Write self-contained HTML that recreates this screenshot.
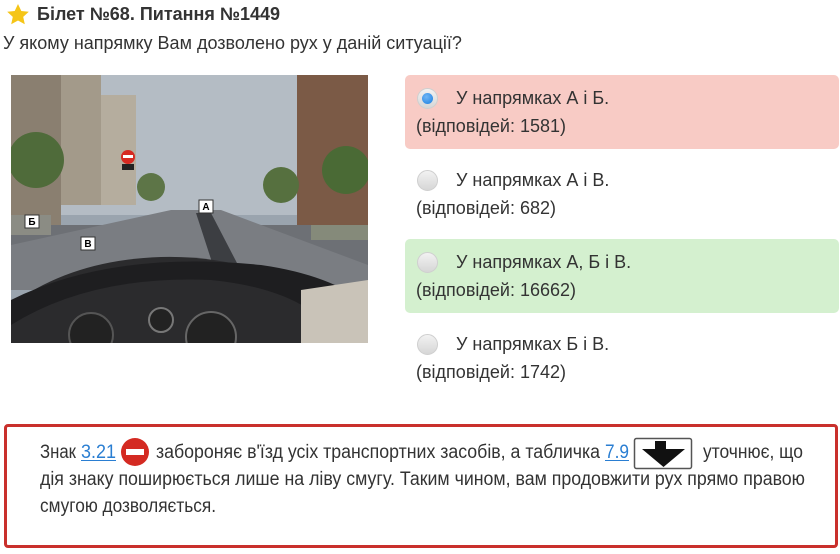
<!DOCTYPE html>
<html><head><meta charset="utf-8"><style>
*{margin:0;padding:0;box-sizing:border-box}
body{width:840px;height:554px;background:#fff;font-family:"Liberation Sans",Arial,sans-serif;color:#333;position:relative;overflow:hidden}
.abs{position:absolute}
h1{position:absolute;left:37px;top:4px;font-size:18px;font-weight:bold;color:#333;white-space:nowrap}
.q{position:absolute;left:3px;top:33px;font-size:18px;white-space:nowrap}
.ans{position:absolute;left:405px;width:434px;height:74px;border-radius:5px;font-size:18px}
.ans .t{position:absolute;left:51px;top:13px;white-space:nowrap}
.ans .c{position:absolute;left:11px;top:41px;white-space:nowrap}
.rad{position:absolute;left:12px;top:13px;width:21px;height:21px;border-radius:50%;background:linear-gradient(#f2f2f2,#d6d6d6);border:1px solid #cfcfcf}
.rad.on::after{content:"";position:absolute;left:4px;top:4px;width:11px;height:11px;border-radius:50%;background:radial-gradient(circle at 40% 35%,#6fb6f5,#1a7ee0)}
.exp{position:absolute;left:4px;top:424px;width:834px;height:124px;border:3px solid #c9302c;border-radius:4px}
</style></head><body>
<svg class="abs" style="left:6px;top:3px" width="24" height="24" viewBox="0 0 24 24"><path d="M12 1l3.3 7 7.5.8-5.6 5.1 1.6 7.4L12 17.5 5.2 21.3l1.6-7.4L1.2 8.8 8.7 8z" fill="#f5c518"/></svg>
<h1>Білет №68. Питання №1449</h1>
<div class="q">У якому напрямку Вам дозволено рух у даній ситуації?</div>

<svg class="abs" style="left:11px;top:75px" width="357" height="268" viewBox="0 0 357 268">
<rect width="357" height="268" fill="#9aa4ae"/>
<rect width="357" height="140" fill="#b4bcc4"/>
<rect x="0" y="0" width="50" height="150" fill="#8a7f70"/>
<rect x="50" y="0" width="40" height="130" fill="#a39a8a"/>
<rect x="90" y="20" width="35" height="110" fill="#b5ad9e"/>
<rect x="286" y="0" width="71" height="160" fill="#7b5a46"/>
<circle cx="25" cy="85" r="28" fill="#4f6b3a"/>
<circle cx="335" cy="95" r="24" fill="#4a6a35"/>
<circle cx="270" cy="110" r="18" fill="#56703f"/>
<circle cx="140" cy="112" r="14" fill="#5d7547"/>
<polygon points="0,150 357,150 357,210 0,210" fill="#6d7075"/>
<polygon points="160,135 210,135 357,190 357,215 0,215 0,170" fill="#7a7d82"/>
<polygon points="185,138 200,138 240,215 210,215" fill="#3c3e42"/>
<rect x="0" y="140" width="40" height="20" fill="#8b8c84"/>
<rect x="300" y="150" width="57" height="15" fill="#858a7a"/>
<circle cx="117" cy="82" r="7" fill="#d62a22"/><rect x="112" y="80" width="10" height="3" fill="#fff"/>
<rect x="111" y="89" width="12" height="6" fill="#222"/>
<rect x="188" y="125" width="14" height="13" fill="#fff" stroke="#333"/><text x="195" y="135" font-size="10" text-anchor="middle" font-weight="bold" fill="#000">А</text>
<rect x="14" y="140" width="14" height="13" fill="#fff" stroke="#333"/><text x="21" y="150" font-size="10" text-anchor="middle" font-weight="bold" fill="#000">Б</text>
<rect x="70" y="162" width="14" height="13" fill="#fff" stroke="#333"/><text x="77" y="172" font-size="10" text-anchor="middle" font-weight="bold" fill="#000">В</text>
<path d="M0 268 L0 230 Q60 185 150 182 Q230 180 290 215 L290 268Z" fill="#2b2b2d"/>
<path d="M0 225 Q100 175 250 190 Q320 200 357 230 L357 268 L330 268 Q300 215 200 205 Q80 200 0 250Z" fill="#1e1e20"/>
<path d="M290 215 L357 205 L357 268 L290 268Z" fill="#c9c3b8"/>
<circle cx="80" cy="260" r="22" fill="#222" stroke="#555" stroke-width="2"/>
<circle cx="150" cy="245" r="12" fill="#222" stroke="#777" stroke-width="2"/>
<circle cx="200" cy="262" r="25" fill="#222" stroke="#666" stroke-width="2"/>
</svg>

<div class="ans" style="top:75px;background:#f8cbc5"><div class="rad on"></div><div class="t">У напрямках А і Б.</div><div class="c">(відповідей: 1581)</div></div>
<div class="ans" style="top:157px"><div class="rad"></div><div class="t">У напрямках А і В.</div><div class="c">(відповідей: 682)</div></div>
<div class="ans" style="top:239px;background:#d4f0cf"><div class="rad"></div><div class="t">У напрямках А, Б і В.</div><div class="c">(відповідей: 16662)</div></div>
<div class="ans" style="top:321px"><div class="rad"></div><div class="t">У напрямках Б і В.</div><div class="c">(відповідей: 1742)</div></div>

<div class="exp"></div>
<svg class="abs" style="left:0;top:0" width="840" height="554" viewBox="0 0 840 554" font-family="Liberation Sans, Arial, sans-serif" font-size="19" fill="#333">
<text x="40" y="458" textLength="36" lengthAdjust="spacingAndGlyphs">Знак</text>
<text x="81" y="458" textLength="35" lengthAdjust="spacingAndGlyphs" fill="#2a7ed2">3.21</text>
<rect x="81" y="460" width="35" height="1" fill="#2a7ed2"/>
<circle cx="135" cy="452" r="14" fill="#d42a22"/><rect x="126" y="449" width="18" height="6" fill="#fff"/>
<text x="156" y="458" textLength="444" lengthAdjust="spacingAndGlyphs">забороняє в'їзд усіх транспортних засобів, а табличка</text>
<text x="605" y="458" textLength="24" lengthAdjust="spacingAndGlyphs" fill="#2a7ed2">7.9</text>
<rect x="605" y="460" width="24" height="1" fill="#2a7ed2"/>
<rect x="634.5" y="438.5" width="57" height="30" rx="2" fill="#fff" stroke="#555" stroke-width="1.5"/>
<path d="M655 441h11v8h19l-21.5 18L642 449h13z" fill="#111"/>
<text x="703" y="458" textLength="100" lengthAdjust="spacingAndGlyphs">уточнює, що</text>
<text x="40" y="485" textLength="765" lengthAdjust="spacingAndGlyphs">дія знаку поширюється лише на ліву смугу. Таким чином, вам продовжити рух прямо правою</text>
<text x="40" y="512" textLength="176" lengthAdjust="spacingAndGlyphs">смугою дозволяється.</text>
</svg>
</body></html>
